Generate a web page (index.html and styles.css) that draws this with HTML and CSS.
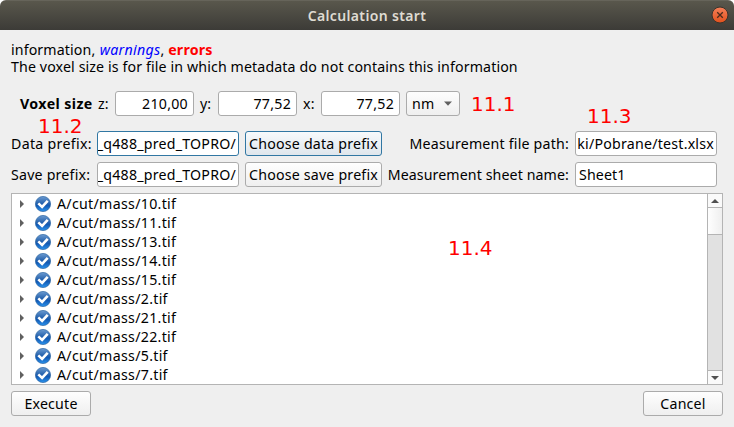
FILE: index.html
```
<!DOCTYPE html>
<html lang="en">
<head>
<meta charset="utf-8">
<title>Calculation start</title>
<link rel="stylesheet" href="styles.css">
</head>
<body>
<div class="window">
  <header class="titlebar">
    <span class="title">Calculation start</span>
    <svg class="close" width="18" height="18" viewBox="0 0 18 18"><defs><linearGradient id="cg" x1="0" y1="0" x2="0" y2="1"><stop offset="0" stop-color="#f58059"/><stop offset="1" stop-color="#e0501c"/></linearGradient></defs><circle cx="9" cy="9" r="8" fill="url(#cg)" stroke="#38332c"/><path d="M6.2 6.2l5.6 5.6M11.8 6.2l-5.6 5.6" stroke="#4a2a1c" stroke-width="1.3"/></svg>
  </header>
  <main class="content">
    <div class="info">
      <div class="line">information, <i class="warn">warnings</i>, <b class="err">errors</b></div>
      <div class="line">The voxel size is for file in which metadata do not contains this information</div>
    </div>
    <div class="row voxel">
      <b class="vox-label">Voxel size</b>
      <span class="axis">z:</span><div class="field num">210,00</div>
      <span class="axis">y:</span><div class="field num">77,52</div>
      <span class="axis">x:</span><div class="field num">77,52</div>
      <div class="combo"><span>nm</span><svg width="8" height="5" viewBox="0 0 8 5"><path d="M0 0.5h8L4 4.8z" fill="#606060"/></svg></div>
    </div>
    <div class="row prefix">
      <span class="label left">Data prefix:</span><div class="field path focus"><span class="tail">_q488_pred_TOPRO/</span></div>
      <button class="btn choose focus">Choose data prefix</button>
      <span class="label right">Measurement file path:</span><div class="field path"><span class="tail">ki/Pobrane/test.xlsx</span></div>
    </div>
    <div class="row prefix save">
      <span class="label left">Save prefix:</span><div class="field path"><span class="tail">_q488_pred_TOPRO/</span></div>
      <button class="btn choose">Choose save prefix</button>
      <span class="label right">Measurement sheet name:</span><div class="field path sheet">Sheet1</div>
    </div>
    <div class="list">
      <svg class="defs" width="0" height="0"><defs>
        <linearGradient id="bg" x1="0" y1="0" x2="0" y2="1"><stop offset="0" stop-color="#6c9bd1"/><stop offset=".45" stop-color="#2864ae"/><stop offset=".6" stop-color="#1259b3"/><stop offset="1" stop-color="#2a93ee"/></linearGradient>
        <symbol id="check" viewBox="0 0 16 16"><circle cx="8" cy="8" r="7.6" fill="url(#bg)" stroke="#2d65a4" stroke-width=".7"/><path d="M3.3 7.4L7.1 11L12.7 4.9" fill="none" stroke="#fff" stroke-width="2.6"/></symbol>
        <symbol id="arrow" viewBox="0 0 4 8"><path d="M0 0L4 4L0 8z" fill="#606060"/></symbol>
      </defs></svg>
      <div class="items">
        <div class="item"><svg class="arrow"><use href="#arrow"/></svg><svg class="check"><use href="#check"/></svg><span>A/cut/mass/10.tif</span></div>
        <div class="item"><svg class="arrow"><use href="#arrow"/></svg><svg class="check"><use href="#check"/></svg><span>A/cut/mass/11.tif</span></div>
        <div class="item"><svg class="arrow"><use href="#arrow"/></svg><svg class="check"><use href="#check"/></svg><span>A/cut/mass/13.tif</span></div>
        <div class="item"><svg class="arrow"><use href="#arrow"/></svg><svg class="check"><use href="#check"/></svg><span>A/cut/mass/14.tif</span></div>
        <div class="item"><svg class="arrow"><use href="#arrow"/></svg><svg class="check"><use href="#check"/></svg><span>A/cut/mass/15.tif</span></div>
        <div class="item"><svg class="arrow"><use href="#arrow"/></svg><svg class="check"><use href="#check"/></svg><span>A/cut/mass/2.tif</span></div>
        <div class="item"><svg class="arrow"><use href="#arrow"/></svg><svg class="check"><use href="#check"/></svg><span>A/cut/mass/21.tif</span></div>
        <div class="item"><svg class="arrow"><use href="#arrow"/></svg><svg class="check"><use href="#check"/></svg><span>A/cut/mass/22.tif</span></div>
        <div class="item"><svg class="arrow"><use href="#arrow"/></svg><svg class="check"><use href="#check"/></svg><span>A/cut/mass/5.tif</span></div>
        <div class="item"><svg class="arrow"><use href="#arrow"/></svg><svg class="check"><use href="#check"/></svg><span>A/cut/mass/7.tif</span></div>
      </div>
      <div class="scrollbar">
        <div class="step"><svg width="8" height="4" viewBox="0 0 8 4"><path d="M0 4L4 0L8 4z" fill="#505050"/></svg></div>
        <div class="thumb"></div>
        <div class="track"></div>
        <div class="step end"><svg width="8" height="4" viewBox="0 0 8 4"><path d="M0 0L4 4L8 0z" fill="#505050"/></svg></div>
      </div>
    </div>
    <footer class="actions">
      <button class="btn action">Execute</button>
      <button class="btn action">Cancel</button>
    </footer>
  </main>
  <span class="note n1">11.1</span>
  <span class="note n2">11.2</span>
  <span class="note n3">11.3</span>
  <span class="note n4">11.4</span>
</div>
</body>
</html>
```
FILE: styles.css
```
* { box-sizing: border-box; }
body {
  margin: 0;
  background: #fff;
  color: #000;
  font: 14.2px/17px "Noto Sans", "Open Sans", sans-serif;
  letter-spacing: .12px;
}
.window {
  position: relative;
  width: 734px;
  height: 427px;
  background: #efefef;
  border-radius: 6px 6px 0 0;
  overflow: hidden;
  white-space: nowrap;
}
.titlebar {
  position: relative;
  display: flex;
  align-items: center;
  justify-content: center;
  height: 30px;
  padding-bottom: 1px;
  background: linear-gradient(#59574c, #3c3b37);
  border-top: 1px solid #66645a;
}
.title { font-size: 14px; font-weight: 600; color: #dfdbd2; letter-spacing: .36px; }
.close { position: absolute; right: 5px; top: 5px; }
.content { padding: 11px 11px 0; }
.info { height: 49px; }
.line { height: 17px; }
.warn { color: #00f; letter-spacing: .3px; margin-left: .5px; }
.err { color: #f00; letter-spacing: .2px; }
.row { display: flex; align-items: center; }
.voxel { height: 26px; padding-left: 9px; }
.vox-label { width: 78px; letter-spacing: .4px; }
.axis { width: 18px; margin-left: -1px; }
.vox-label + .axis { width: 17px; margin-left: 0; }
.field {
  height: 25px;
  border: 1px solid #ababab;
  border-radius: 3px;
  background: #fff;
  line-height: 24px;
  overflow: hidden;
}
.num { width: 79px; margin-right: 7px; padding-right: 5px; text-align: right; letter-spacing: .25px; }
.num + .combo { margin-left: -1px; }
.combo {
  display: flex;
  align-items: center;
  justify-content: space-between;
  width: 54px;
  height: 25px;
  padding: 0 7px 0 5px;
  border: 1px solid #ababab;
  border-radius: 3px;
  background: linear-gradient(#fdfdfd, #efefef);
}
.prefix { height: 25px; margin-top: 15px; }
.save { margin-top: 6px; }
.left { width: 86px; letter-spacing: .3px; }
.save .left { letter-spacing: .2px; }
.right { width: 187px; text-align: right; margin-right: 6px; letter-spacing: .2px; }
.save .right { letter-spacing: .1px; }
.path { display: flex; justify-content: flex-end; width: 142px; padding-right: 2px; }
.tail { letter-spacing: .22px; }
.sheet { display: block; padding-left: 3px; }
.field.focus { border-color: #3177a3; }
.btn {
  display: flex;
  align-items: center;
  justify-content: center;
  height: 25px;
  padding: 0;
  border: 1px solid #ababab;
  border-radius: 3px;
  background: linear-gradient(#fefefe, #efefef);
  color: #000;
  font: inherit;
  letter-spacing: .2px;
}
.choose { width: 137px; margin-left: 6px; }
.btn.focus { border-color: #3177a3; background: linear-gradient(#f7fafc, #dfe6ec); }
.list {
  display: flex;
  height: 192px;
  margin-top: 6px;
  border: 1px solid #b4b4b4;
  background: #fff;
}
.defs { position: absolute; }
.items { flex: 1; }
.item { display: flex; align-items: center; height: 19px; padding-left: 8px; letter-spacing: .3px; }
.arrow { width: 4px; height: 8px; margin-right: 11px; }
.check { width: 16px; height: 16px; margin-right: 6px; }
.scrollbar { display: flex; flex-direction: column; width: 15px; border-left: 1px solid #b4b4b4; }
.step { display: flex; align-items: center; justify-content: center; height: 14px; border-bottom: 1px solid #b4b4b4; background: #fafafa; }
.end { border-top: 1px solid #b4b4b4; border-bottom: 0; }
.thumb { height: 27px; border-bottom: 1px solid #b4b4b4; background: linear-gradient(90deg, #fefefe, #efefef); }
.track { flex: 1; background: #e1e1e1; }
.actions { display: flex; justify-content: space-between; margin-top: 6px; }
.action { width: 80px; }
.note { position: absolute; color: #f00; font: 20px/24px "DejaVu Sans", sans-serif; letter-spacing: 0; }
.n1 { left: 471px; top: 92px; }
.n2 { left: 38px; top: 114px; }
.n3 { left: 587px; top: 104px; }
.n4 { left: 448px; top: 236px; }
```
